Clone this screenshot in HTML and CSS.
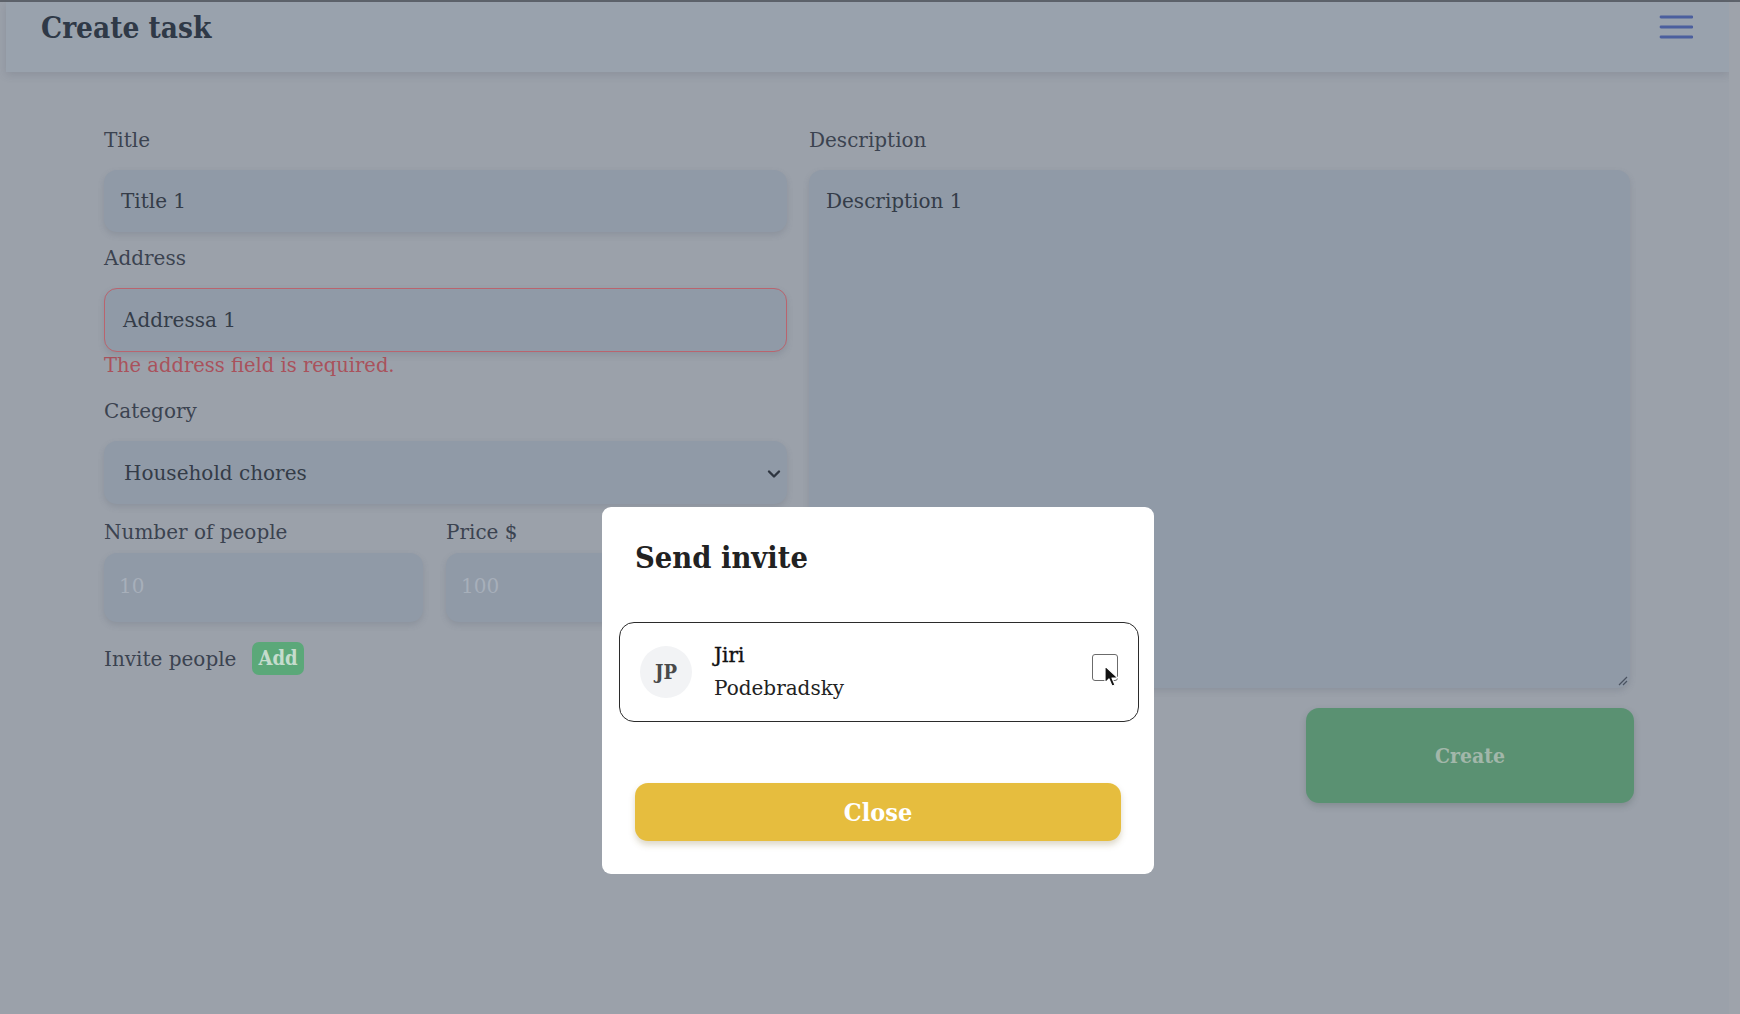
FILE: index.html
```html
<!DOCTYPE html>
<html>
<head>
<meta charset="utf-8">
<link rel="stylesheet" href="styles.css">
</head>
<body>
<div class="topline"></div>
<div class="page">
  <header class="header">
    <h1 class="title">Create task</h1>
    <svg class="burger" width="34" height="24" viewBox="0 0 34 24"><path d="M2 2H33M2 12H33M2 22H33" stroke="#4b5f9e" stroke-width="2.8" stroke-linecap="round"/></svg>
  </header>
  <main class="form">
    <div class="col left">
      <label class="lbl">Title</label>
      <div class="input">Title 1</div>
      <label class="lbl">Address</label>
      <div class="input err">Addressa 1</div>
      <div class="errmsg">The address field is required.</div>
      <label class="lbl">Category</label>
      <div class="input select">Household chores
        <svg class="chev" width="14" height="10" viewBox="0 0 14 10"><path d="M2 2.5L7 7.5L12 2.5" fill="none" stroke="#2e3540" stroke-width="2.4" stroke-linecap="round" stroke-linejoin="round"/></svg>
      </div>
      <div class="pair">
        <div class="half">
          <label class="lbl">Number of people</label>
          <div class="input ph">10</div>
        </div>
        <div class="half">
          <label class="lbl">Price $</label>
          <div class="input ph">100</div>
        </div>
      </div>
      <div class="invite"><span>Invite people</span><span class="add">Add</span></div>
    </div>
    <div class="col right">
      <label class="lbl">Description</label>
      <div class="input area">Description 1
        <svg class="grip" width="12" height="12" viewBox="0 0 12 12"><path d="M11 3L3 11M11 7L7 11" stroke="#4a5260" stroke-width="1.2"/></svg>
      </div>
      <div class="actions"><div class="create">Create</div></div>
    </div>
  </main>
  <div class="strip"></div>
</div>
<div class="modal">
  <h2 class="mtitle">Send invite</h2>
  <div class="card">
    <div class="avatar">JP</div>
    <div class="name"><div class="first">Jiri</div><div>Podebradsky</div></div>
    <div class="check"></div>
    <svg class="cursor" width="16" height="24" viewBox="0 0 16 24"><path d="M1 1L1 18L5 14L8 21L11 20L8 13L14 13Z" fill="#111" stroke="#fff" stroke-width="1.2" stroke-linejoin="round"/></svg>
  </div>
  <div class="close">Close</div>
</div>
</body>
</html>
```
FILE: styles.css
```css
html, body {
  margin: 0;
  padding: 0;
}
body {
  width: 1740px;
  height: 1014px;
  overflow: hidden;
  background: #9ba1aa;
  font-family: "DejaVu Serif", serif;
  color: #3a4250;
  position: relative;
}
.topline {
  height: 2px;
  background: #5e636b;
}
.page {
  display: flex;
  flex-direction: column;
  position: relative;
}
.header {
  margin: 0 11px 0 6px;
  height: 70px;
  background: #99a2ad;
  box-shadow: 0 3px 8px rgba(70, 80, 95, 0.18);
  display: flex;
  align-items: flex-start;
  justify-content: space-between;
  padding: 0 36px 0 35px;
}
.title {
  margin: 6px 0 0 0;
  font-family: "DejaVu Serif Condensed", "DejaVu Serif", serif;
  font-stretch: condensed;
  font-size: 29.5px;
  line-height: 40px;
  font-weight: 700;
  color: #2f3947;
}
.burger {
  margin-top: 13px;
}
.strip {
  position: absolute;
  top: 0;
  right: 0;
  width: 11px;
  height: 1014px;
  background: #9ea3ab;
}
.form {
  display: grid;
  grid-template-columns: 683px 825px;
  column-gap: 22px;
  padding: 54px 0 0 104px;
}
.col {
  display: flex;
  flex-direction: column;
}
.lbl {
  font-size: 20px;
  line-height: 28px;
  color: #3b4350;
  margin-bottom: 16px;
}
.input {
  height: 62px;
  box-sizing: border-box;
  border-radius: 13px;
  background: #909aa7;
  box-shadow: 0 3px 6px rgba(80, 90, 105, 0.2);
  display: flex;
  align-items: center;
  padding: 0 17px;
  font-size: 20px;
  color: #343c48;
  margin-bottom: 12px;
  position: relative;
}
.input.err {
  height: 64px;
  border: 1.5px solid #b9646e;
  padding-left: 18px;
  margin-bottom: 1px;
}
.errmsg {
  font-size: 19.5px;
  line-height: 26px;
  color: #a9525c;
  margin-bottom: 18px;
}
.input.select {
  height: 63px;
  padding-left: 20px;
  justify-content: space-between;
  padding-right: 6px;
  margin-bottom: 14px;
}
.chev {
  margin-top: 2px;
}
.pair {
  display: grid;
  grid-template-columns: 319px 1fr;
  column-gap: 23px;
}
.half {
  display: flex;
  flex-direction: column;
}
.pair .lbl {
  margin-bottom: 7px;
}
.input.ph {
  height: 69px;
  color: #a7afba;
  padding-left: 15px;
  padding-bottom: 4px;
  margin-bottom: 20px;
}
.invite {
  display: flex;
  align-items: center;
  gap: 16px;
  font-size: 20px;
  color: #3b4350;
}
.add {
  background: #5ba879;
  color: #c5dccd;
  font-family: "DejaVu Serif Condensed", "DejaVu Serif", serif;
  font-stretch: condensed;
  font-weight: 700;
  border-radius: 7px;
  padding: 3px 6px 3px;
  font-size: 20px;
  line-height: 27px;
}
.input.area {
  height: 518px;
  align-items: flex-start;
  padding-top: 19px;
  margin-bottom: 20px;
  margin-right: 4px;
}
.grip {
  position: absolute;
  right: 2px;
  bottom: 2px;
}
.actions {
  display: flex;
  justify-content: flex-end;
}
.create {
  width: 328px;
  height: 95px;
  border-radius: 13px;
  background: #5a9172;
  color: #a2b7aa;
  font-family: "DejaVu Serif Condensed", "DejaVu Serif", serif;
  font-stretch: condensed;
  font-size: 21px;
  font-weight: 700;
  display: flex;
  align-items: center;
  justify-content: center;
  box-shadow: 0 3px 6px rgba(60, 80, 70, 0.25);
}
.modal {
  position: absolute;
  left: 602px;
  top: 507px;
  width: 552px;
  height: 367px;
  box-sizing: border-box;
  background: #ffffff;
  border-radius: 9px;
  padding: 20px 33px 0;
  display: flex;
  flex-direction: column;
}
.mtitle {
  margin: 0;
  font-family: "DejaVu Serif Condensed", "DejaVu Serif", serif;
  font-stretch: condensed;
  font-size: 30.5px;
  line-height: 60px;
  font-weight: 700;
  color: #222;
}
.card {
  margin: 35px -18px 0 -16px;
  height: 100px;
  box-sizing: border-box;
  border: 1.5px solid #2b2b2b;
  border-radius: 15px;
  display: flex;
  align-items: center;
  padding: 0 18px 0 20px;
  position: relative;
}
.avatar {
  width: 52px;
  height: 52px;
  border-radius: 50%;
  background: #f2f3f5;
  display: flex;
  align-items: center;
  justify-content: center;
  font-family: "DejaVu Serif Condensed", "DejaVu Serif", serif;
  font-stretch: condensed;
  font-size: 20px;
  font-weight: 700;
  color: #4a4a4a;
  margin-right: 22px;
}
.name {
  flex: 1;
  font-size: 20px;
  line-height: 33px;
  color: #222;
  margin-top: 0;
}
.name .first {
  color: #111;
  -webkit-text-stroke: 0.4px #111;
}
.check {
  width: 24px;
  height: 25px;
  border: 1.5px solid #6b6b6b;
  border-radius: 3px;
  margin-top: -10px;
  margin-right: 2px;
}
.cursor {
  position: absolute;
  left: 484px;
  top: 42px;
}
.close {
  margin-top: 61px;
  height: 58px;
  border-radius: 13px;
  background: #e6bd3e;
  color: #ffffff;
  font-family: "DejaVu Serif Condensed", "DejaVu Serif", serif;
  font-stretch: condensed;
  font-size: 25px;
  font-weight: 700;
  display: flex;
  align-items: center;
  justify-content: center;
  box-shadow: 0 4px 6px rgba(120, 100, 40, 0.25);
}
```
